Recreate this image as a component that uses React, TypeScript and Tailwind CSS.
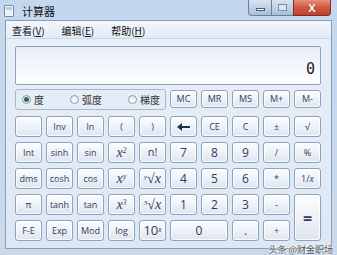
import type { ReactNode } from 'react';

const cjk = { fontFamily: '"Noto Sans CJK SC", "Noto Sans", sans-serif' };
const ui = { fontFamily: '"Open Sans", "Noto Sans", sans-serif' };
const serif = { fontFamily: '"Liberation Serif", "DejaVu Serif", serif' };

function Key({ children, className = '' }: { children: ReactNode; className?: string }) {
  return (
    <div
      className={`flex items-center justify-center rounded-[3px] border border-[#8fa2bb] bg-gradient-to-b from-[#fbfcfe] via-[#eef2f8] to-[#dde5ef] text-[9px] text-[#2c3f58] shadow-[inset_0_0_0_1px_rgba(255,255,255,0.8)] ${className}`}
      style={ui}
    >
      {children}
    </div>
  );
}

function Math({ children }: { children: ReactNode }) {
  return (
    <span className="text-[14px] italic leading-none text-[#2c3f58]" style={serif}>
      {children}
    </span>
  );
}

function Radio({ label, checked }: { label: string; checked?: boolean }) {
  return (
    <div className="flex items-center gap-[3px]">
      <span className="flex h-[9px] w-[9px] items-center justify-center rounded-full border border-[#8a9bb0] bg-gradient-to-b from-[#e4e9ef] to-white">
        {checked && <span className="h-[5px] w-[5px] rounded-full bg-[#2f6b52]" />}
      </span>
      <span className="text-[10px] leading-none text-[#333]" style={cjk}>
        {label}
      </span>
    </div>
  );
}

export default function App() {
  return (
    <div className="relative h-[255px] w-[337px] overflow-hidden bg-gradient-to-b from-[#c3d7ee] to-[#cad9ea]">
      {/* Title bar */}
      <div className="flex h-[20px] items-start">
        <div className="mt-[5px] ml-[4px] flex h-[12px] w-[10px] flex-col gap-[1px] rounded-[1px] border border-[#7d8ea3] bg-[#eef3f8] p-[1px]">
          <div className="h-[3px] bg-[#b9cde2]" />
        </div>
        <span className="mt-[4px] ml-[8px] text-[11px] leading-[14px] text-[#111]" style={cjk}>
          计算器
        </span>
        <div className="ml-auto mr-[6px] flex h-[16px]">
          <div className="flex w-[24px] items-center justify-center rounded-bl-[4px] border border-t-0 border-[#6b7f98] bg-gradient-to-b from-[#d7e3f1] to-[#a9bfd8]">
            <div className="mt-[3px] h-[3px] w-[9px] border border-[#4b5e77] bg-white" />
          </div>
          <div className="flex w-[21px] items-center justify-center border-b border-[#6b7f98] bg-gradient-to-b from-[#d7e3f1] to-[#a9bfd8]">
            <div className="h-[7px] w-[9px] border border-[#7d90a8] bg-[#dbe6f2]" />
          </div>
          <div className="flex w-[38px] items-center justify-center rounded-br-[4px] border border-t-0 border-[#7a2e22] bg-gradient-to-b from-[#e8907b] via-[#d2573f] to-[#c0412b]">
            <span className="text-[11px] font-bold leading-none text-white [text-shadow:0_0_1px_#5a1a10]" style={ui}>
              X
            </span>
          </div>
        </div>
      </div>

      {/* Client */}
      <div className="mx-[5px] flex h-[229px] flex-col border border-[#8a9db5] bg-gradient-to-b from-[#e9eff8] to-[#dde7f3]">
        {/* Menu */}
        <div className="flex h-[18px] items-center gap-[17px] border-b border-[#c8d5e5] bg-gradient-to-b from-[#f3f6fb] to-[#e3ebf5] pl-[6px] pt-[1px] text-[10px] text-[#111]" style={cjk}>
          <span>
            查看(<span className="underline">V</span>)
          </span>
          <span>
            编辑(<span className="underline">E</span>)
          </span>
          <span>
            帮助(<span className="underline">H</span>)
          </span>
        </div>

        <div className="flex flex-col px-[9px] pt-[7px]">
          {/* Display */}
          <div className="flex h-[39px] w-[306px] items-end justify-end rounded-[2px] border border-[#8fa2ba] bg-gradient-to-b from-[#e6edf6] via-[#f3f7fc] to-white pr-[5px] pb-[7px]">
            <span className="text-[15px] leading-none text-[#222]" style={{ fontFamily: '"DejaVu Sans Mono", monospace' }}>
              0
            </span>
          </div>

          {/* Radio row + memory */}
          <div className="mt-[4px] flex h-[21px] gap-[4px]">
            <div className="flex w-[151px] items-center gap-[26px] rounded-[3px] border border-[#a9b8cb] pl-[6px]">
              <Radio label="度" checked />
              <Radio label="弧度" />
              <Radio label="梯度" />
            </div>
            <div className="grid grid-cols-[repeat(5,27px)] gap-x-[4px] pt-[1px]">
              {['MC', 'MR', 'MS', 'M+', 'M-'].map((m) => (
                <Key key={m} className="h-[18px]">
                  {m}
                </Key>
              ))}
            </div>
          </div>

          {/* Keypad */}
          <div className="mt-[6px] grid grid-cols-[repeat(10,27px)] grid-rows-[repeat(5,21px)] gap-x-[4px] gap-y-[5px]">
            <Key> </Key>
            <Key>Inv</Key>
            <Key>ln</Key>
            <Key>(</Key>
            <Key>)</Key>
            <Key>
              <span className="h-[2px] w-[12px] bg-[#1e3350] relative before:absolute before:left-[-1px] before:top-[-3px] before:border-y-[4px] before:border-r-[5px] before:border-y-transparent before:border-r-[#1e3350] before:content-['']" />
            </Key>
            <Key>CE</Key>
            <Key>C</Key>
            <Key>±</Key>
            <Key>√</Key>

            <Key>Int</Key>
            <Key>sinh</Key>
            <Key>sin</Key>
            <Key>
              <Math>
                x<sup className="text-[8px]">2</sup>
              </Math>
            </Key>
            <Key>
              <span className="text-[11px]">n!</span>
            </Key>
            <Key className="text-[12px]">7</Key>
            <Key className="text-[12px]">8</Key>
            <Key className="text-[12px]">9</Key>
            <Key>/</Key>
            <Key>%</Key>

            <Key>dms</Key>
            <Key>cosh</Key>
            <Key>cos</Key>
            <Key>
              <Math>
                x<sup className="text-[8px]">y</sup>
              </Math>
            </Key>
            <Key>
              <Math>
                <sup className="text-[7px]">y</sup>√x
              </Math>
            </Key>
            <Key className="text-[12px]">4</Key>
            <Key className="text-[12px]">5</Key>
            <Key className="text-[12px]">6</Key>
            <Key>*</Key>
            <Key>
              1/<span className="italic">x</span>
            </Key>

            <Key>π</Key>
            <Key>tanh</Key>
            <Key>tan</Key>
            <Key>
              <Math>
                x<sup className="text-[8px]">3</sup>
              </Math>
            </Key>
            <Key>
              <Math>
                <sup className="text-[7px]">3</sup>√x
              </Math>
            </Key>
            <Key className="text-[12px]">1</Key>
            <Key className="text-[12px]">2</Key>
            <Key className="text-[12px]">3</Key>
            <Key>-</Key>
            <Key className="row-span-2 text-[16px] font-bold">=</Key>

            <Key>F-E</Key>
            <Key>Exp</Key>
            <Key>Mod</Key>
            <Key>log</Key>
            <Key>
              <span className="text-[13px] leading-none">
                10<sup className="text-[7px] italic">x</sup>
              </span>
            </Key>
            <Key className="col-span-2 text-[12px]">0</Key>
            <Key className="text-[12px]">.</Key>
            <Key>+</Key>
          </div>
        </div>
      </div>

      {/* Watermark */}
      <div
        className="absolute right-[4px] bottom-[1px] text-[9px] leading-none text-[#555] [text-shadow:0_0_2px_#fff,0_0_2px_#fff]"
        style={cjk}
      >
        头条 @财金职场
      </div>
    </div>
  );
}
